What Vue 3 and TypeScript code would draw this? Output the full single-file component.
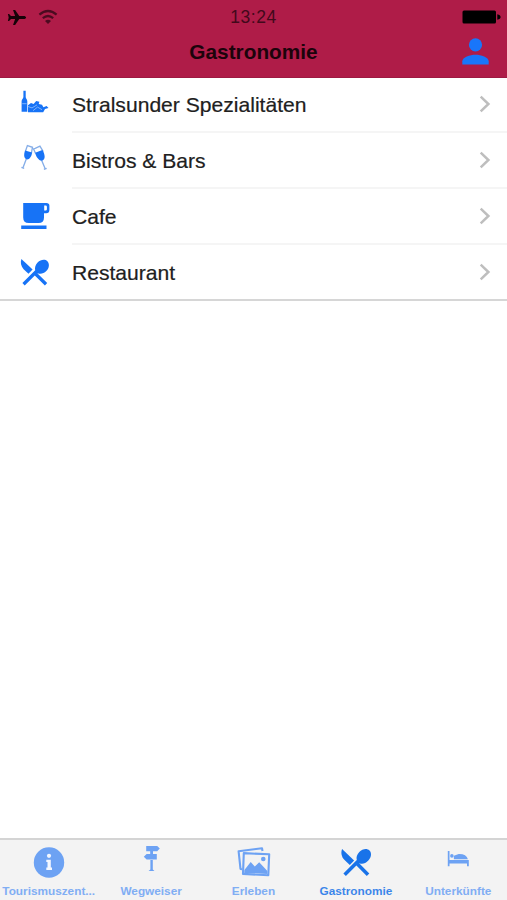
<script setup lang="ts">
import { ref } from 'vue'

type IconName = 'food' | 'glasses' | 'cup' | 'cutlery'

interface Category {
  label: string
  icon: IconName
}

interface Tab {
  label: string
  icon: 'info' | 'signpost' | 'photos' | 'cutlery' | 'bed'
}

const categories: Category[] = [
  { label: 'Stralsunder Spezialitäten', icon: 'food' },
  { label: 'Bistros & Bars', icon: 'glasses' },
  { label: 'Cafe', icon: 'cup' },
  { label: 'Restaurant', icon: 'cutlery' },
]

const tabs: Tab[] = [
  { label: 'Tourismuszent...', icon: 'info' },
  { label: 'Wegweiser', icon: 'signpost' },
  { label: 'Erleben', icon: 'photos' },
  { label: 'Gastronomie', icon: 'cutlery' },
  { label: 'Unterkünfte', icon: 'bed' },
]

const activeTab = ref('Gastronomie')
</script>

<template>
  <div class="screen">
    <header class="header">
      <div class="status">
        <div class="status-left">
          <svg class="plane" viewBox="0 0 20 18">
            <path d="M19.6 9C19.6 8 18.5 7.4 17 7.4H12.4L8 1H5.8L8 7.4H3.6L1.6 5.4H.4L1.2 9L.4 12.6H1.6L3.6 10.6H8L5.8 17H8L12.4 10.6H17C18.5 10.6 19.6 10 19.6 9Z" />
          </svg>
          <svg class="wifi" viewBox="0 0 20 16">
            <path d="M1.4 5.6Q10-1.6 18.6 5.6M4.8 9.2Q10 4.8 15.2 9.2" />
            <path class="dot" d="M10 15L7 12Q10 9.7 13 12Z" />
          </svg>
        </div>
        <span class="time">13:24</span>
        <div class="status-right">
          <svg class="battery" viewBox="0 0 40 14">
            <rect x="1.5" y="0.5" width="33.5" height="13" rx="1.5" />
            <path d="M36.3 4.2Q39.6 5 39.6 7T36.3 9.8Z" />
          </svg>
        </div>
      </div>
      <div class="navbar">
        <h1 class="title">Gastronomie</h1>
        <button class="profile" aria-label="Profil">
          <svg viewBox="0 0 27 27">
            <circle cx="13.5" cy="6.8" r="6.6" />
            <path d="M.3 26.4V23.3C.3 19.2 8 16.7 13.5 16.7S26.7 19.2 26.7 23.3V26.4Z" />
          </svg>
        </button>
      </div>
    </header>

    <main class="list">
      <div v-for="item in categories" :key="item.label" class="row">
        <div class="row-icon">
          <svg v-if="item.icon === 'food'" viewBox="1 3.3 30 30">
            <path d="M3.4 3H5.7V9.2C5.7 10.8 7.3 11.5 7.3 13.5V24H1.6V13.5C1.6 11.5 3.4 10.8 3.4 9.2Z" />
            <path d="M8 17.5L11 15.4L13.6 16.4L16.2 13.2L19.4 14.1L18.7 16.3L22 17L23.4 19.5L26.6 18.2L28.5 20.2L25 21.4L23.2 24.5H8Z" />
            <path class="cut-line" d="M7.7 18.7L12 20.2L17 17.2M13 23L17.5 19.4L22 22M2.2 16H6.6" />
          </svg>
          <svg v-else-if="item.icon === 'glasses'" viewBox="1.5 4.8 29 29">
            <path class="glass-line" d="M5.8 9.8L7.7 4.4L12.6 6L11.5 12M15.2 7L19.8 4.9L23 10.3M15.6 12L13.6 7.6L15.2 7M6.8 16.8L3.3 26M21.2 18.1L25 27M1.9 25.5L4.6 26.4M23.6 27.5L26.3 26.4" />
            <path d="M5.4 9.2L12.2 11C11.9 14.8 9.5 18.2 7 17.7C4 16.9 4.2 12.7 5.4 9.2ZM15.2 11.3L22.2 8.6C24.5 12.4 25.6 17.4 22.3 18.7C19.2 19.8 16 15.4 15.2 11.3Z" />
          </svg>
          <svg v-else-if="item.icon === 'cup'" viewBox="0 1 30 30">
            <path fill-rule="evenodd" d="M2.2 2H25.3Q28.4 2 28.4 4.8V8.7Q28.4 12.2 25.2 12.2H23V16.4Q23 22 17.5 22H7.8Q2.2 22 2.2 16.4ZM23.2 4.5V9.4H24.7Q25.9 9.4 25.9 8.2V5.7Q25.9 4.5 24.7 4.5Z" />
            <path d="M.2 24.5H25.5V28H.2Z" />
          </svg>
          <svg v-else viewBox="0.6 0 30 30">
            <path d="M1 2L12.2 12.6L8.1 16.7L3.2 12.2C.5 9.3-.2 5 1 2Z" />
            <path d="M18 16.6C20.7 17.4 23.6 16.4 25.9 14.1C28.9 11.1 29.4 6.8 27 4.2C24.5 1.7 20.2 2.5 17.2 5.5C15.1 7.8 14.1 10.8 14.8 13.3L2 26.1L4.3 28.4L14.4 18.5L24.5 28.4L26.8 26.1L16.9 16.2Z" />
          </svg>
        </div>
        <div class="row-body">
          <span class="row-label">{{ item.label }}</span>
          <svg class="chevron" viewBox="0 0 12 18">
            <path d="M1.7 1.7L9.4 9L1.7 16.3" />
          </svg>
        </div>
      </div>
    </main>

    <nav class="tabbar">
      <button
        v-for="tab in tabs"
        :key="tab.label"
        class="tab"
        :class="{ active: activeTab === tab.label }"
        @click="activeTab = tab.label"
      >
        <svg v-if="tab.icon === 'info'" class="tab-icon" viewBox="0 0 34 34">
          <circle cx="17" cy="17.5" r="15.2" />
          <circle class="light" cx="17" cy="10.8" r="2.1" />
          <path class="light" d="M14.3 14.8H18.8V22.5H20V24.9H14.3V22.5H15.5V17.1H14.3Z" />
        </svg>
        <svg v-else-if="tab.icon === 'signpost'" class="tab-icon" viewBox="0 0 34 34">
          <path d="M12.2 1H23.2L25.8 3.6L23.2 6.2H12.2ZM22.8 9H12.6L9.8 11.7L12.6 14.4H22.8ZM16.2 6H19V9H16.2ZM16.4 14H18.8V24.4L20.5 26H14.6L16.4 24.4Z" />
        </svg>
        <svg v-else-if="tab.icon === 'photos'" class="tab-icon" viewBox="0 0 34 34">
          <path class="frame" d="M5.2 24.3L3.5 24L1.6 6.2L25 3.3L25.5 6" />
          <path class="frame" d="M6.8 8.1L32.2 9.3L31.3 30.3L6 28.9Z" />
          <path d="M7.4 24.9L13.7 16.9L17.8 21.5L22.2 17.2L30.4 26V29L7.2 27.9Z" />
          <circle cx="26.3" cy="14" r="2.3" />
        </svg>
        <svg v-else-if="tab.icon === 'cutlery'" class="tab-icon" viewBox="0 0 34 34">
          <path d="M3.1 4.1L15.1 15.6L10.8 19.9L5.3 14.8C2.3 11.8 1.7 7.4 3.1 4.1Z" />
          <path d="M20.9 18.4C23.8 19.3 26.7 18.2 29.1 15.8C32.2 12.7 33.1 8.2 30.5 5.5C27.9 2.8 23.4 3.8 20.3 6.9C17.9 9.3 17 12.2 17.8 15L4.4 28.4L6.9 30.9L17.4 20.6L27.8 30.9L30.3 28.4L19.9 18Z" />
        </svg>
        <svg v-else class="tab-icon" viewBox="0 0 34 34">
          <path d="M6.8 6H8.5V15H27.8V21.2H26V18.6H8.5V21.2H6.8Z" />
          <path d="M12.9 14.2V10.8L17.7 8.9Q25.4 8.7 26.9 14.2Z" />
          <circle cx="10.9" cy="10.9" r="1.8" />
        </svg>
        <span>{{ tab.label }}</span>
      </button>
    </nav>
  </div>
</template>

<style>
body {
  margin: 0;
}
</style>

<style scoped>
.screen {
  display: flex;
  flex-direction: column;
  height: 900px;
  overflow: hidden;
  background: #fff;
  font-family: "Liberation Sans", Arial, sans-serif;
  color: #202020;
}

svg {
  display: block;
  fill: currentColor;
}

button {
  padding: 0;
  border: 0;
  background: none;
  font: inherit;
}

.header {
  box-sizing: border-box;
  flex: none;
  height: 78px;
  background: #af1c48;
  border-bottom: 1px solid #9d1a42;
}

.status {
  display: grid;
  grid-template-columns: 1fr auto 1fr;
  align-items: center;
  height: 34px;
  padding: 0 6px;
  color: #160308;
}

.status-left {
  display: flex;
  align-items: center;
  gap: 11px;
  padding-left: 1px;
}

.plane {
  width: 20px;
  height: 17px;
}

.wifi {
  width: 20px;
  height: 16px;
  fill: none;
  stroke: #4b0b20;
  stroke-width: 2.2;
}

.wifi .dot {
  fill: #4b0b20;
  stroke: none;
}

.time {
  color: #42091b;
  font-size: 17.5px;
  letter-spacing: 0.5px;
}

.status-right {
  display: flex;
  justify-content: flex-end;
}

.battery {
  width: 40px;
  height: 14px;
  color: #000;
}

.navbar {
  display: grid;
  grid-template-columns: 1fr auto 1fr;
  align-items: center;
  height: 35px;
  padding: 0 18px;
}

.title {
  grid-column: 2;
  margin: 0;
  color: #1c030b;
  font-size: 20.8px;
  line-height: 24px;
}

.profile {
  justify-self: end;
  color: #1976fa;
}

.profile svg {
  width: 27px;
  height: 27px;
}

.list {
  flex: 1;
}

.row {
  display: flex;
  box-sizing: border-box;
  height: 56.2px;
}

.row:first-child {
  height: 55px;
}

.row:last-child {
  height: 55.6px;
  border-bottom: 2px solid #d6d6d6;
}

.row-icon {
  display: flex;
  flex: 0 0 72px;
  align-items: center;
  box-sizing: border-box;
  padding-left: 21px;
  color: #1773f6;
}

.row-icon svg {
  width: 30px;
  height: 30px;
  overflow: visible;
}

.cut-line {
  fill: none;
  stroke: #a9cdff;
  stroke-width: 0.7;
}

.glass-line {
  fill: none;
  stroke: #86aee8;
  stroke-width: 1.3;
}

.row-body {
  display: flex;
  flex: 1;
  align-items: center;
  justify-content: space-between;
  box-sizing: border-box;
  padding-right: 16px;
  border-bottom: 2px solid #f5f5f5;
  font-size: 21.1px;
}

.row-label {
  padding-top: 1px;
  -webkit-text-stroke: 0.2px currentColor;
}

.row:last-child .row-body {
  border-bottom: 0;
}

.chevron {
  width: 12px;
  height: 18px;
  margin-bottom: 1px;
  fill: none;
  stroke: #bebebe;
  stroke-width: 2.5;
}

.tabbar {
  display: flex;
  flex: none;
  justify-content: center;
  box-sizing: border-box;
  height: 62px;
  border-top: 2px solid #d4d4d4;
  background: #f3f3f3;
}

.tab {
  display: flex;
  flex: 0 0 102.4px;
  flex-direction: column;
  align-items: center;
  padding-top: 5px;
  color: #6da2f3;
  font-size: 11.8px;
  font-weight: 700;
  line-height: 14px;
}

.tab-icon {
  width: 34px;
  height: 34px;
  margin-bottom: 5px;
}

.tab.active {
  color: #1973e9;
}

.tab span {
  opacity: 0.85;
}

.light {
  fill: #f3f7ff;
}

.frame {
  fill: none;
  stroke: currentColor;
  stroke-width: 2.1;
  stroke-linejoin: round;
}
</style>
